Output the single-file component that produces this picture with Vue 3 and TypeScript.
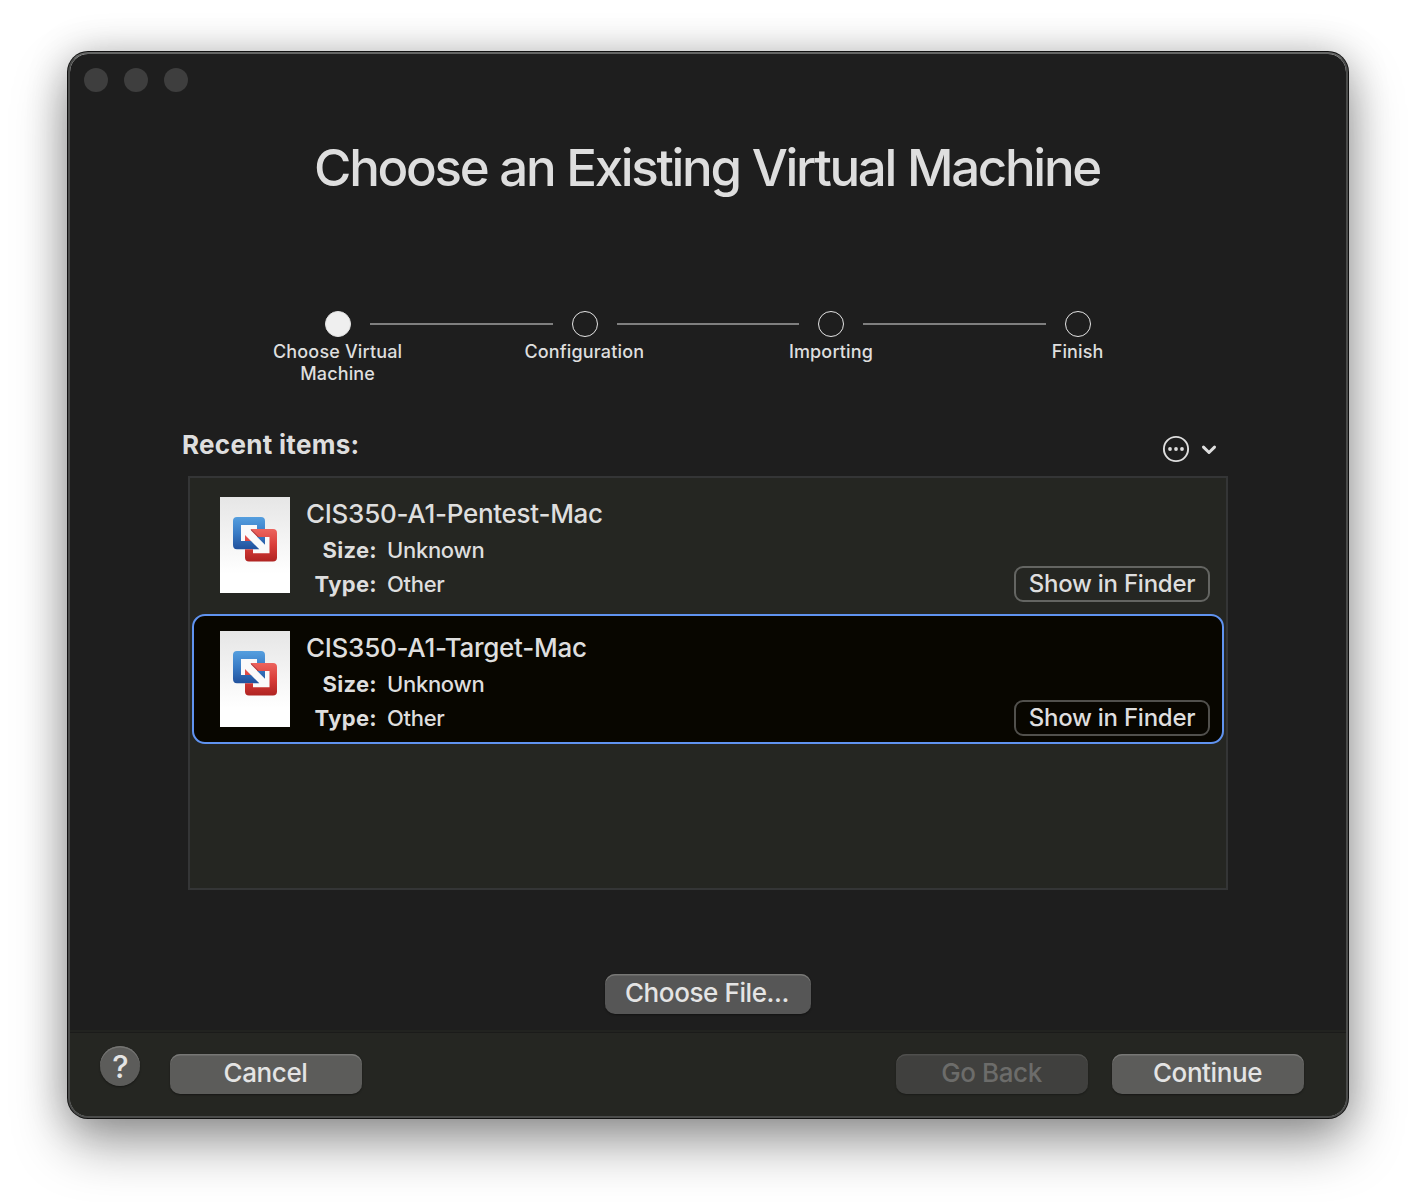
<script setup lang="ts">
interface Step {
  label: string
  active: boolean
}

interface MachineItem {
  name: string
  size: string
  type: string
  selected: boolean
}

const steps: Step[] = [
  { label: 'Choose Virtual Machine', active: true },
  { label: 'Configuration', active: false },
  { label: 'Importing', active: false },
  { label: 'Finish', active: false },
]

const machines: MachineItem[] = [
  { name: 'CIS350-A1-Pentest-Mac', size: 'Unknown', type: 'Other', selected: false },
  { name: 'CIS350-A1-Target-Mac', size: 'Unknown', type: 'Other', selected: true },
]
</script>

<template>
  <div class="desktop">
    <div class="window">
      <div class="titlebar">
        <span v-for="n in 3" :key="n" class="light"></span>
      </div>

      <h1 class="title"><span>Choose an Existing Virtual Machine</span></h1>

      <div class="track">
        <template v-for="(step, i) in steps" :key="step.label">
          <span v-if="i > 0" class="line"></span>
          <span class="dot" :class="{ active: step.active }"></span>
        </template>
      </div>
      <div class="labels">
        <div v-for="step in steps" :key="step.label" class="label"><span>{{ step.label }}</span></div>
      </div>

      <div class="list-header">
        <span class="recent">Recent items:</span>
        <svg class="more" width="56" height="28" viewBox="0 0 56 28" fill="none">
          <circle cx="14" cy="14" r="12.1" stroke="#dedede" stroke-width="1.9" />
          <circle cx="8" cy="14" r="1.9" fill="#dedede" />
          <circle cx="14" cy="14" r="1.9" fill="#dedede" />
          <circle cx="20" cy="14" r="1.9" fill="#dedede" />
          <path d="M41.5 12.1 L47 17.5 L52.5 12.1" stroke="#dedede" stroke-width="3" stroke-linecap="round" stroke-linejoin="round" />
        </svg>
      </div>

      <div class="list">
        <div v-for="m in machines" :key="m.name" class="row" :class="{ selected: m.selected }">
          <svg class="thumb" width="70" height="96" viewBox="0 0 70 96">
            <defs>
              <linearGradient id="paper" x1="0" y1="0" x2="0" y2="1">
                <stop offset="0" stop-color="#e6e6e6" />
                <stop offset="0.8" stop-color="#ffffff" />
              </linearGradient>
              <linearGradient id="blue" gradientUnits="userSpaceOnUse" x1="0" y1="20" x2="0" y2="52">
                <stop offset="0" stop-color="#559fdf" />
                <stop offset="0.5" stop-color="#3a7cc6" />
                <stop offset="1" stop-color="#22529d" />
              </linearGradient>
              <linearGradient id="red" gradientUnits="userSpaceOnUse" x1="0" y1="32" x2="0" y2="64.5">
                <stop offset="0" stop-color="#ec645e" />
                <stop offset="0.5" stop-color="#d93d39" />
                <stop offset="1" stop-color="#b02422" />
              </linearGradient>
            </defs>
            <rect width="70" height="96" fill="url(#paper)" />
            <path d="M33 56 V40 H49.5 V56 Z M21 28 H37 V44 H21 Z" fill="#fafafa" />
            <path
              d="M17 20 H41 Q45 20 45 24 V47.8 L37 39.8 V28 H21 V44 H31 L39.3 52.2 H17 Q13 52.2 13 48 V24 Q13 20 17 20 Z"
              fill="url(#blue)"
            />
            <path
              d="M31 32 H53 Q57 32 57 36 V60.5 Q57 64.5 53 64.5 H29 Q25 64.5 25 60.5 V52.2 H33 V56.2 H49.5 V40 H37.5 L31 33.5 Z M25 38 L31 44 H25 Z"
              fill="url(#red)"
            />
            <path d="M31 32.6 L38.4 40" stroke="#6b2433" stroke-opacity="0.7" stroke-width="0.9" />
          </svg>
          <div class="info">
            <div class="name"><span>{{ m.name }}</span></div>
            <div class="field"><b>Size:</b><span>{{ m.size }}</span></div>
            <div class="field"><b>Type:</b><span>{{ m.type }}</span></div>
          </div>
          <button class="finder"><span>Show in Finder</span></button>
        </div>
      </div>

      <button class="btn choose"><span>Choose File...</span></button>

      <div class="footer">
        <button class="help"><span>?</span></button>
        <button class="btn cancel"><span>Cancel</span></button>
        <button class="btn back" disabled><span>Go Back</span></button>
        <button class="btn continue"><span>Continue</span></button>
      </div>
    </div>
  </div>
</template>

<style>
body {
  margin: 0;
  background: #fff;
}
</style>

<style scoped>
.desktop {
  box-sizing: border-box;
  width: 1416px;
  height: 1202px;
  padding: 52px 68px;
  overflow: hidden;
  background: #fff;
  font-family: Inter, "Liberation Sans", sans-serif;
  color: #dedede;
}
.window {
  box-sizing: border-box;
  display: flex;
  flex-direction: column;
  width: 1280px;
  height: 1066px;
  border: 2px solid #4b4c4b;
  border-top-color: #656665;
  border-radius: 20px;
  background: #1e1e1e;
  background-clip: padding-box;
  box-shadow:
    0 0 0 1px #111,
    0 26px 54px rgba(0, 0, 0, 0.36),
    0 2px 40px rgba(0, 0, 0, 0.24);
}
.titlebar {
  display: flex;
  gap: 16px;
  padding: 14px 14px 0;
}
.light {
  width: 24px;
  height: 24px;
  border-radius: 50%;
  background: #3e3e3e;
}
.title {
  margin: 44px 0 0;
  height: 64px;
  line-height: 64px;
  text-align: center;
  font-size: 51px;
  font-weight: 450;
  letter-spacing: -2.3px;
  word-spacing: 0.6px;
  text-indent: -2px;
  white-space: nowrap;
}
.track {
  display: flex;
  align-items: center;
  margin: 111px 255px 0;
}
.dot {
  box-sizing: border-box;
  width: 26px;
  height: 26px;
  border: 1.4px solid #e4e4e4;
  border-radius: 50%;
}
.dot.active {
  background: #efefef;
}
.line {
  flex: 1;
  height: 2px;
  margin: 0 19px;
  background: #7f7f7f;
}
.labels {
  display: flex;
  width: 986.7px;
  height: 44px;
  margin: 4px 0 0 144.3px;
}
.label {
  flex: 1;
  padding: 0 50px;
  text-align: center;
  font-size: 18px;
  font-weight: 500;
  line-height: 22px;
  letter-spacing: 0.15px;
}
.list-header {
  display: flex;
  justify-content: space-between;
  align-items: flex-start;
  height: 50px;
  margin: 41px 128px 0 112px;
}
.recent {
  font-size: 26px;
  font-weight: 700;
  line-height: 38px;
  letter-spacing: 0.3px;
}
.more {
  margin-top: 9px;
}
.list {
  box-sizing: border-box;
  display: flex;
  flex-direction: column;
  gap: 4px;
  height: 414px;
  margin: 0 118px;
  padding: 2px;
  border: 2px solid #343536;
  background: #252622;
}
.row {
  box-sizing: border-box;
  display: flex;
  height: 130px;
  padding: 15px 12px 0 26px;
  border: 2px solid transparent;
  border-radius: 13px;
}
.row.selected {
  border-color: #6093f0;
  background: #080600;
}
.thumb {
  flex: none;
}
.info {
  flex: 1;
  margin-left: 16px;
}
.name {
  height: 36px;
  font-size: 26px;
  font-weight: 450;
  line-height: 34px;
  letter-spacing: -0.28px;
}
.field {
  display: flex;
  height: 34px;
  font-size: 22px;
  font-weight: 450;
  line-height: 34px;
  letter-spacing: -0.3px;
}
.field b {
  width: 71px;
  margin-right: 10px;
  text-align: right;
  font-weight: 700;
  letter-spacing: 0.3px;
}
button {
  box-sizing: border-box;
  display: flex;
  align-items: center;
  justify-content: center;
  padding: 0;
  border: 0;
  font-family: inherit;
  font-weight: 450;
  color: #e4e4e4;
  white-space: nowrap;
}
.finder {
  align-self: flex-end;
  width: 196px;
  height: 36px;
  margin-bottom: 6px;
  padding-bottom: 1px;
  border: 2px solid #646562;
  border-radius: 9px;
  background: transparent;
  font-size: 24px;
  letter-spacing: -0.25px;
  color: #dedede;
}
.selected .finder {
  border-color: #51504c;
}
.btn {
  width: 192px;
  height: 40px;
  padding: 0 1px 3px 0;
  border-radius: 10px;
  background: #5c5c5a;
  box-shadow:
    inset 0 1.5px 0 #777775,
    0 1px 2px rgba(0, 0, 0, 0.4);
  font-size: 26px;
  letter-spacing: -0.4px;
}
.choose {
  align-self: center;
  width: 206px;
  margin-top: 84px;
  padding-right: 2px;
  background: #565656;
}
.footer {
  box-sizing: border-box;
  display: flex;
  align-items: flex-start;
  height: 84px;
  margin-top: auto;
  padding: 13px 42px 0 30px;
  border-top: 1px solid #1b1b1a;
  border-radius: 0 0 18px 18px;
  background: #252622;
  box-shadow: 0 -2px 0 #222320;
}
.help {
  width: 40px;
  height: 40px;
  padding-left: 1px;
  border-radius: 50%;
  background: #5c5c5a;
  box-shadow:
    inset 0 1.5px 0 #747472,
    0 1px 2px rgba(0, 0, 0, 0.4);
  font-size: 31px;
}
.cancel,
.back,
.continue {
  margin-top: 8px;
}
.cancel {
  margin-left: 30px;
}
.back {
  margin-left: auto;
  background: #40403e;
  box-shadow:
    inset 0 1.5px 0 #4f4f4d,
    0 1px 2px rgba(0, 0, 0, 0.3);
  color: #6c6c6a;
}
.continue {
  margin-left: 24px;
}
</style>
